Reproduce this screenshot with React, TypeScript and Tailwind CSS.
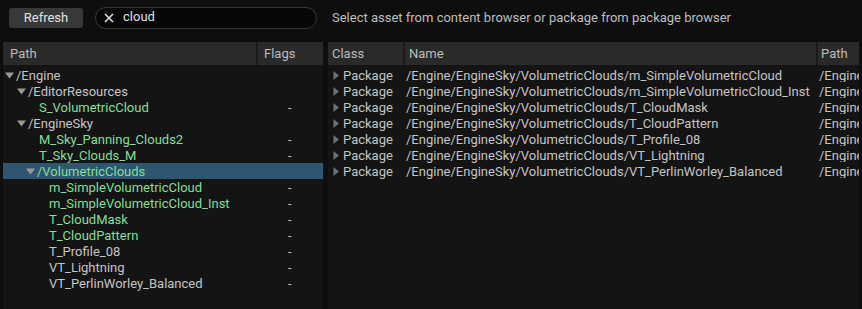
const green = 'text-[#86de98]'
const gray = 'text-[#c4c4c4]'

type TreeRow = { label: string; depth: number; folder?: boolean; green?: boolean; flag?: boolean; selected?: boolean }

const tree: TreeRow[] = [
  { label: '/Engine', depth: 0, folder: true },
  { label: '/EditorResources', depth: 1, folder: true },
  { label: 'S_VolumetricCloud', depth: 2, green: true, flag: true },
  { label: '/EngineSky', depth: 1, folder: true },
  { label: 'M_Sky_Panning_Clouds2', depth: 2, green: true, flag: true },
  { label: 'T_Sky_Clouds_M', depth: 2, green: true, flag: true },
  { label: '/VolumetricClouds', depth: 2, folder: true, green: true, selected: true },
  { label: 'm_SimpleVolumetricCloud', depth: 3, green: true, flag: true },
  { label: 'm_SimpleVolumetricCloud_Inst', depth: 3, green: true, flag: true },
  { label: 'T_CloudMask', depth: 3, green: true, flag: true },
  { label: 'T_CloudPattern', depth: 3, green: true, flag: true },
  { label: 'T_Profile_08', depth: 3, flag: true },
  { label: 'VT_Lightning', depth: 3, flag: true },
  { label: 'VT_PerlinWorley_Balanced', depth: 3, flag: true },
]

const assets = [
  'm_SimpleVolumetricCloud',
  'm_SimpleVolumetricCloud_Inst',
  'T_CloudMask',
  'T_CloudPattern',
  'T_Profile_08',
  'VT_Lightning',
  'VT_PerlinWorley_Balanced',
]

function DownArrow() {
  return (
    <svg width="9" height="7" viewBox="0 0 9 7" className="shrink-0">
      <path d="M0 0.5 L9 0.5 L4.5 6.5 Z" fill="#9a9a9a" />
    </svg>
  )
}

function RightArrow() {
  return (
    <svg width="6" height="9" viewBox="0 0 6 9" className="shrink-0">
      <path d="M0.5 0 L6 4.5 L0.5 9 Z" fill="#6e6e6e" />
    </svg>
  )
}

export default function App() {
  return (
    <div
      className="w-[862px] h-[309px] bg-[#0e0e0e] flex flex-col overflow-hidden text-[13px] leading-none"
      style={{ fontFamily: 'Roboto, "Noto Sans", sans-serif' }}
    >
      <div className="h-[35px] flex items-center shrink-0">
        <button className="ml-[9px] w-[74px] h-[20px] rounded-[3px] bg-[#383838] text-[#e2e2e2] text-[13px] flex items-center justify-center">
          Refresh
        </button>
        <div className="ml-[12px] w-[222px] h-[22px] rounded-full border border-[#373737] bg-[#070707] flex items-center">
          <svg width="10" height="10" viewBox="0 0 10 10" className="ml-[8px]">
            <path d="M1 1 L9 9 M9 1 L1 9" stroke="#dcdcdc" strokeWidth="1.6" />
          </svg>
          <span className="ml-[9px] text-[#e0e0e0] text-[13px] -mt-[2px]">cloud</span>
        </div>
        <span className="ml-[15px] text-[#bdbdbd] text-[13px] -mt-[1px]">
          Select asset from content browser or package from package browser
        </span>
      </div>

      <div className="flex flex-1 min-h-0 pt-[7px] pl-[2px] pr-[3px] gap-[5px]">
        <div className="w-[321px] bg-[#141414] border-l border-[#0a0a0a] flex flex-col">
          <div className="h-[23px] bg-[#2a2a2a] flex text-[#bcbcbc] text-[13px] shrink-0">
            <div className="w-[255px] flex items-center pl-[7px] border-r-2 border-[#1a1a1a]">Path</div>
            <div className="flex-1 flex items-center pl-[6px]">Flags</div>
          </div>
          <div className="pt-[2px]">
            {tree.map((r) => (
              <div
                key={r.label}
                className={`h-[16px] flex items-center ${r.selected ? 'bg-[#2e5670]' : ''}`}
              >
                <div className="w-[255px] flex items-center">
                  <div
                    className={
                      r.depth === 0 ? 'w-[2px]' : r.depth === 1 ? 'w-[14px]' : r.depth === 2 ? 'w-[23px]' : 'w-[45px]'
                    }
                  />
                  {r.folder ? (
                    <div className="w-[10px] flex items-center">
                      <DownArrow />
                    </div>
                  ) : r.depth === 2 ? (
                    <div className="w-[12px]" />
                  ) : null}
                  <span className={`${r.green ? green : gray} ml-[1px]`}>{r.label}</span>
                </div>
                <div className="flex-1 pl-[30px] text-[#c8c8c8]">{r.flag ? '-' : ''}</div>
              </div>
            ))}
          </div>
        </div>

        <div className="flex-1 bg-[#141414] flex flex-col overflow-hidden">
          <div className="h-[23px] bg-[#2a2a2a] flex text-[#bcbcbc] text-[13px] shrink-0">
            <div className="w-[77px] flex items-center pl-[4px] border-r-2 border-[#1a1a1a]">Class</div>
            <div className="w-[413px] flex items-center pl-[4px] border-r-2 border-[#1a1a1a]">Name</div>
            <div className="flex-1 flex items-center pl-[3px]">Path</div>
          </div>
          <div className="pt-[2px]">
            {assets.map((a) => (
              <div key={a} className={`h-[16px] flex items-center ${gray} whitespace-nowrap`}>
                <div className="w-[77px] flex items-center pl-[5px]">
                  <RightArrow />
                  <span className="ml-[4px]">Package</span>
                </div>
                <div className="w-[413px] pl-[1px]">/Engine/EngineSky/VolumetricClouds/{a}</div>
                <div className="flex-1 min-w-0 overflow-hidden pl-[1px]">/Engine</div>
              </div>
            ))}
          </div>
        </div>
      </div>
    </div>
  )
}
